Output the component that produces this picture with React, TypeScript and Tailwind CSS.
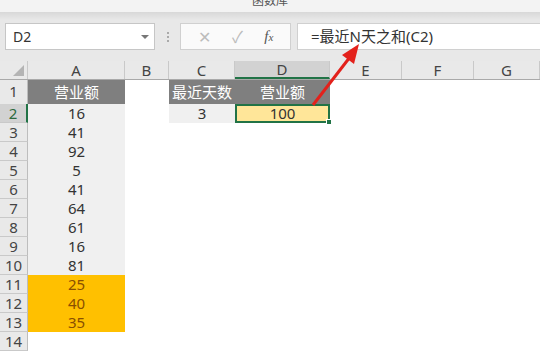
import React from 'react';

const COLS = 'grid grid-cols-[28px_97px_44px_66px_95px_72px_72px_66px]';
const font = { fontFamily: '"Noto Sans", "Noto Sans CJK SC", sans-serif' };

const values = [16, 41, 92, 5, 41, 64, 61, 16, 81, 25, 40, 35];

function RowHead({ n, active }: { n: number; active?: boolean }) {
  return (
    <div
      className={
        'flex items-center justify-center border-b border-[#c9c9c9] text-[15px] ' +
        (active
          ? 'bg-[#d2d2d2] border-r-2 border-r-[#217346] text-[#2d6a3e]'
          : 'bg-[#e9e9e9] border-r border-r-[#bdbdbd] text-[#444]')
      }
    >
      {n}
    </div>
  );
}

export default function App() {
  return (
    <div className="w-[540px] h-[355px] overflow-hidden bg-white relative" style={font}>
      {/* ribbon tail, title only half visible */}
      <div className="h-[12px] bg-[#f3f3f3] overflow-hidden flex justify-center">
        <span className="text-[12px] leading-[12px] text-[#555] -mt-[5px]">函数库</span>
      </div>
      <div className="h-[8px] bg-gradient-to-b from-[#d8d8d8] to-[#e8e8e8]" />

      {/* formula bar */}
      <div className="h-[41px] bg-[#e8e8e8] flex items-start pt-[3px] pl-[5px]">
        <div className="w-[150px] h-[27px] bg-white border border-[#c6c6c6] flex items-center justify-between pl-[7px] pr-[5px]">
          <span className="text-[14px] text-[#333]">D2</span>
          <span className="w-0 h-0 border-l-[4px] border-r-[4px] border-t-[4px] border-l-transparent border-r-transparent border-t-[#777]" />
        </div>
        <div className="w-[25px] h-[27px] flex flex-col items-center justify-center gap-[2px]">
          <span className="w-[2px] h-[2px] bg-[#aaa]" />
          <span className="w-[2px] h-[2px] bg-[#aaa]" />
          <span className="w-[2px] h-[2px] bg-[#aaa]" />
        </div>
        <div className="w-[111px] h-[27px] bg-[#fafafa] border border-[#d0d0d0] flex items-center justify-around px-[6px]">
          <span className="text-[16px] text-[#bcbcbc]">✕</span>
          <span className="text-[16px] text-[#bcbcbc]">✓</span>
          <span className="text-[15px] italic text-[#555]" style={{ fontFamily: '"Liberation Serif", serif' }}>
            f<span className="text-[11px]">x</span>
          </span>
        </div>
        <div className="ml-[6px] flex-1 h-[27px] bg-white border border-[#d0d0d0] border-r-0 flex items-center pl-[13px]">
          <span className="text-[15px] text-[#333]">=最近N天之和(C2)</span>
        </div>
      </div>

      {/* column headers */}
      <div className={COLS + ' h-[19px] bg-[#e9e9e9] border-b border-[#a9a9a9] text-[15px] text-[#444]'}>
        <div className="relative border-r border-[#c9c9c9]">
          <svg className="absolute right-[3px] bottom-[3px]" width="11" height="11">
            <polygon points="11,0 11,11 0,11" fill="#b4b4b4" />
          </svg>
        </div>
        {['A', 'B', 'C', 'D', 'E', 'F', 'G'].map((c) => (
          <div
            key={c}
            className={
              'flex items-center justify-center leading-none ' +
              (c === 'D'
                ? 'bg-[#d2d2d2] border-b-2 border-[#217346] border-r border-r-[#c9c9c9]'
                : 'border-r border-[#c9c9c9]')
            }
          >
            {c}
          </div>
        ))}
      </div>

      {/* row 1 */}
      <div className={COLS + ' h-[24px] text-[15px]'}>
        <div className="flex items-end justify-center pb-[1px] bg-[#e9e9e9] border-r border-[#bdbdbd] border-b border-b-[#c9c9c9] text-[#444]">1</div>
        <div className="bg-[#7f7f7f] text-white flex items-center justify-center">营业额</div>
        <div />
        <div className="bg-[#7f7f7f] text-white flex items-center justify-center">最近天数</div>
        <div className="bg-[#7f7f7f] text-white flex items-center justify-center">营业额</div>
        <div />
        <div />
        <div />
      </div>

      {/* rows 2-14 */}
      {Array.from({ length: 13 }).map((_, i) => {
        const r = i + 2;
        const v = values[i];
        const hot = r >= 11 && r <= 13;
        return (
          <div key={r} className={COLS + ' h-[19px] text-[15px] leading-none'}>
            <RowHead n={r} active={r === 2} />
            <div
              className={
                'flex items-center justify-center ' +
                (v === undefined ? '' : hot ? 'bg-[#ffc000] text-[#8a4f00]' : 'bg-[#f0f0f0] text-[#333]')
              }
            >
              {v}
            </div>
            <div />
            {r === 2 ? (
              <>
                <div className="bg-[#f0f0f0] text-[#333] flex items-center justify-center">3</div>
                <div className="relative bg-[#ffe699] text-[#333] flex items-center justify-center border-2 border-[#217346]">
                  100
                  <span className="absolute -right-[4px] -bottom-[4px] w-[6px] h-[6px] bg-[#217346] border border-white" />
                </div>
              </>
            ) : (
              <>
                <div />
                <div />
              </>
            )}
            <div />
            <div />
            <div />
          </div>
        );
      })}

      {/* red arrow pointing at the formula */}
      <svg className="absolute left-0 top-0 pointer-events-none" width="540" height="355">
        <line x1="313" y1="105" x2="350" y2="57" stroke="#e3211b" strokeWidth="3" />
        <polygon points="359,44 354,64 342,55" fill="#e3211b" />
      </svg>
    </div>
  );
}
